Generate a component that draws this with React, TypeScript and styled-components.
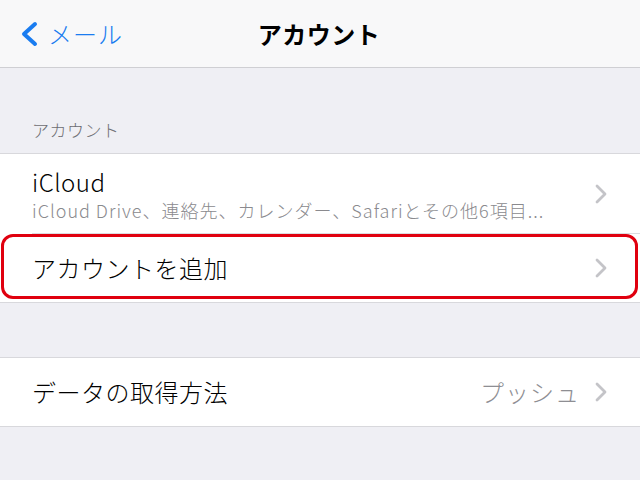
import React from 'react'
import styled, { createGlobalStyle } from 'styled-components'

const GlobalStyle = createGlobalStyle`
  html, body {
    margin: 0;
    padding: 0;
    background: #efeff4;
    font-family: "Noto Sans CJK JP", "Noto Sans", sans-serif;
    -webkit-font-smoothing: antialiased;
  }
`

const Screen = styled.div`
  width: 640px;
  height: 480px;
  overflow: hidden;
  background: #efeff4;
`

const NavBar = styled.div`
  height: 67px;
  border-bottom: 1px solid #cfcfd3;
  background: #f8f8f9;
  display: grid;
  grid-template-columns: 1fr auto 1fr;
  align-items: center;
`

const BackButton = styled.div`
  display: flex;
  align-items: center;
  gap: 9px;
  padding-left: 19px;
  color: #1a7cf0;
  font-size: 24px;
  font-weight: 300;
  line-height: 30px;
  letter-spacing: 1px;
`

const Title = styled.div`
  font-size: 24px;
  font-weight: 700;
  line-height: 30px;
  color: #000;
  letter-spacing: 0.5px;
  margin-left: -2px;
`

const SectionHeader = styled.div<{ $height: number }>`
  height: ${p => p.$height}px;
  display: flex;
  align-items: flex-end;
  padding: 0 32px 11px;
  box-sizing: border-box;
  font-size: 17px;
  font-weight: 300;
  line-height: 24px;
  color: #6d6d72;
  letter-spacing: 0.5px;
`

const Group = styled.div`
  background: #fff;
  border-top: 1px solid #d8d8dc;
  border-bottom: 1px solid #d8d8dc;
`

const Row = styled.div<{ $height: number; $divider?: boolean }>`
  position: relative;
  height: ${p => p.$height}px;
  display: flex;
  align-items: center;
  padding: 0 32px;
  box-sizing: border-box;
  ${p => p.$divider && `
    &::before {
      content: '';
      position: absolute;
      left: 32px;
      right: 0;
      bottom: 0;
      border-bottom: 1px solid #dcdce0;
    }
  `}
`

const Texts = styled.div`
  flex: 1;
  display: flex;
  flex-direction: column;
  min-width: 0;
`

const Label = styled.div`
  font-size: 24px;
  font-weight: 300;
  line-height: 30px;
  color: #000;
  letter-spacing: 0.5px;
`

const SubLabel = styled.div`
  font-size: 18px;
  font-weight: 300;
  line-height: 22px;
  color: #8a8a8e;
  white-space: nowrap;
  letter-spacing: 1px;
  margin-top: 2px;
`

const Value = styled.div`
  font-size: 24px;
  font-weight: 300;
  line-height: 30px;
  color: #8e8e93;
  margin-right: 14px;
  letter-spacing: 1px;
`

const Highlight = styled.div`
  position: absolute;
  top: 0;
  left: 1px;
  right: 2px;
  bottom: 3px;
  border: 3px solid #e0000f;
  border-radius: 12px;
  pointer-events: none;
`

const Gap = styled.div<{ $height: number }>`
  height: ${p => p.$height}px;
`

const Chevron: React.FC = () => (
  <svg width="14" height="22" viewBox="0 0 14 22">
    <polyline points="3,3 11,11 3,19" fill="none" stroke="#c4c4c8" strokeWidth="2.8" strokeLinecap="round" strokeLinejoin="round" />
  </svg>
)

const BackChevron: React.FC = () => (
  <svg width="20" height="26" viewBox="0 0 20 26">
    <polyline points="16,3 5,13 16,23" fill="none" stroke="#1a7cf0" strokeWidth="4" strokeLinecap="round" strokeLinejoin="round" />
  </svg>
)

export default function App() {
  return (
    <Screen>
      <GlobalStyle />
      <NavBar>
        <BackButton>
          <BackChevron />
          <span>メール</span>
        </BackButton>
        <Title>アカウント</Title>
        <div />
      </NavBar>

      <SectionHeader $height={85}>アカウント</SectionHeader>
      <Group>
        <Row $height={80} $divider>
          <Texts>
            <Label>iCloud</Label>
            <SubLabel>iCloud Drive、連絡先、カレンダー、Safariとその他6項目...</SubLabel>
          </Texts>
          <Chevron />
        </Row>
        <Row $height={68}>
          <Texts>
            <Label>アカウントを追加</Label>
          </Texts>
          <Chevron />
          <Highlight />
        </Row>
      </Group>

      <Gap $height={54} />
      <Group>
        <Row $height={68}>
          <Texts>
            <Label>データの取得方法</Label>
          </Texts>
          <Value>プッシュ</Value>
          <Chevron />
        </Row>
      </Group>
    </Screen>
  )
}
